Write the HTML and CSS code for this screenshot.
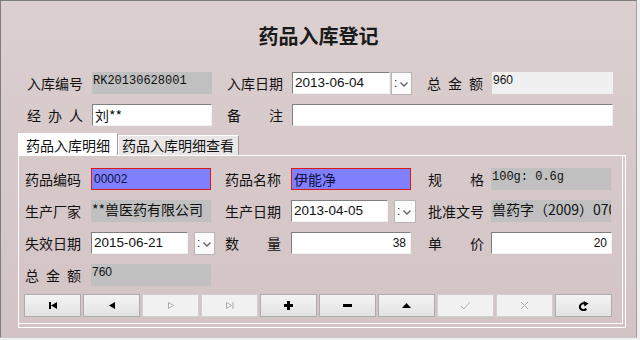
FILE: index.html
```html
<!DOCTYPE html>
<html lang="zh-CN">
<head>
    <meta charset="UTF-8">
    <title>药品入库登记</title>
    <link rel="stylesheet" href="styles.css">
</head>
<body>

<div class="window">
    <div class="title">药品入库登记</div>

    <div class="head-grid">
        <span class="label">入库编号</span>
        <div class="field readonly mono">RK20130628001</div>
        <span class="label">入库日期</span>
        <div class="date-pick">
            <div class="field input date w98">2013-06-04</div>
            <div class="drop ml1"><span>:</span><svg width="8" height="5" viewBox="0 0 8 5"><path d="M0.5 0.5 L4 4 L7.5 0.5" fill="none" stroke="#666" stroke-width="1.4"/></svg></div>
        </div>
        <span class="label">总 金 额</span>
        <div class="field light">960</div>

        <span class="label">经 办 人</span>
        <div class="field input cjk">刘**</div>
        <span class="label">备 注</span>
        <div class="field input wide"></div>
    </div>

    <div class="tabs">
        <div class="tab active">药品入库明细</div>
        <div class="tab">药品入库明细查看</div>
    </div>

    <div class="panel">
        <div class="panel-body">
            <div class="detail-grid">
                <span class="label">药品编码</span>
                <div class="field hl">00002</div>
                <span class="label">药品名称</span>
                <div class="field hl cjk">伊能净</div>
                <span class="label">规 格</span>
                <div class="field readonly mono">100g: 0.6g</div>

                <span class="label">生产厂家</span>
                <div class="field readonly cjk">**兽医药有限公司</div>
                <span class="label">生产日期</span>
                <div class="date-pick">
                    <div class="field input date w97">2013-04-05</div>
                    <div class="drop ml6 w22"><span>:</span><svg width="8" height="5" viewBox="0 0 8 5"><path d="M0.5 0.5 L4 4 L7.5 0.5" fill="none" stroke="#666" stroke-width="1.4"/></svg></div>
                </div>
                <span class="label">批准文号</span>
                <div class="field readonly cjk">兽药字（2009）0700</div>

                <span class="label">失效日期</span>
                <div class="date-pick">
                    <div class="field input date w97">2015-06-21</div>
                    <div class="drop ml6"><span>:</span><svg width="8" height="5" viewBox="0 0 8 5"><path d="M0.5 0.5 L4 4 L7.5 0.5" fill="none" stroke="#666" stroke-width="1.4"/></svg></div>
                </div>
                <span class="label">数 量</span>
                <div class="field input num w120">38</div>
                <span class="label">单 价</span>
                <div class="field input num">20</div>

                <span class="label">总 金 额</span>
                <div class="field readonly">760</div>
            </div>

            <div class="toolbar">
                <div class="btn"><svg width="8" height="7" viewBox="0 0 8 7"><rect x="0" y="0" width="2" height="7"/><polygon points="8,0 2,3.5 8,7"/></svg></div>
                <div class="btn"><svg width="6" height="7" viewBox="0 0 6 7"><polygon points="6,0 0,3.5 6,7"/></svg></div>
                <div class="btn off"><svg width="8" height="9" viewBox="0 0 8 9"><polygon points="1.5,1.5 6.5,4.5 1.5,7.5" fill="none" stroke="#fff" transform="translate(0.6,0.6)"/><polygon points="1.5,1.5 6.5,4.5 1.5,7.5" fill="none" stroke="#a8a8a8"/></svg></div>
                <div class="btn off"><svg width="10" height="9" viewBox="0 0 10 9"><path d="M1.5 1.5 L6.5 4.5 L1.5 7.5 Z M8 1 V8" fill="none" stroke="#fff" transform="translate(0.6,0.6)"/><path d="M1.5 1.5 L6.5 4.5 L1.5 7.5 Z M8 1 V8" fill="none" stroke="#a8a8a8"/></svg></div>
                <div class="btn"><svg width="9" height="9" viewBox="0 0 9 9"><rect x="3" y="0" width="3" height="9"/><rect x="0" y="3" width="9" height="3"/></svg></div>
                <div class="btn"><svg width="9" height="3" viewBox="0 0 9 3"><rect x="0" y="0" width="9" height="3"/></svg></div>
                <div class="btn"><svg width="9" height="5" viewBox="0 0 9 5"><polygon points="0,5 4.5,0 9,5"/></svg></div>
                <div class="btn off"><svg width="11" height="9" viewBox="0 0 11 9"><path d="M1 5 L4 8 L10 1" fill="none" stroke="#fff" transform="translate(0.6,0.6)"/><path d="M1 5 L4 8 L10 1" fill="none" stroke="#adadad"/></svg></div>
                <div class="btn off"><svg width="9" height="9" viewBox="0 0 9 9"><path d="M1 1 L8 8 M8 1 L1 8" fill="none" stroke="#fff" transform="translate(0.6,0.6)"/><path d="M1 1 L8 8 M8 1 L1 8" fill="none" stroke="#adadad"/></svg></div>
                <div class="btn"><svg width="10" height="10" viewBox="0 0 10 10"><path d="M7.2 7.6 A3.4 3.4 0 1 1 5.8 2.6" fill="none" stroke="#000" stroke-width="2"/><polygon points="4.6,0 9.6,2.6 5.4,5.6"/></svg></div>
            </div>
        </div>
    </div>
</div>

</body>
</html>
```

FILE: styles.css
```css
body {
    margin: 0;
    background: #f0f0f0;
    font-family: "Noto Sans CJK SC", "Liberation Sans", sans-serif;
    color: #111;
}

.window {
    box-sizing: border-box;
    width: 637px;
    height: 338px;
    border: 1px solid;
    border-color: #7d7d7d #a0a0a0 #c8c8c8 #7d7d7d;
    background: linear-gradient(#dbcfd0, #d3c3c4);
}

.title {
    padding-top: 21px;
    height: 28px;
    line-height: 28px;
    font-size: 20px;
    font-weight: bold;
    text-align: center;
    color: #1a1a1a;
}

.head-grid {
    display: grid;
    grid-template-columns: 65px 135px 65px 135px 65px 121px;
    grid-auto-rows: 22px;
    row-gap: 10px;
    margin-top: 22px;
    padding-left: 26px;
    align-items: center;
}

.detail-grid {
    display: grid;
    grid-template-columns: 66px 134px 66px 137px 63px 121px;
    grid-auto-rows: 22px;
    row-gap: 10px;
    align-items: center;
}

.label {
    width: 56px;
    font-size: 14px;
    line-height: 22px;
    text-align: justify;
    text-align-last: justify;
}

.field {
    box-sizing: border-box;
    width: 120px;
    height: 22px;
    font-family: "Liberation Sans", sans-serif;
    font-size: 12px;
    overflow: hidden;
    white-space: nowrap;
}

.readonly {
    background: #c0c0c0;
    padding: 1px 0 0 1px;
    line-height: 14px;
}

.light {
    width: 121px;
    background: #f0f0f0;
    padding: 1px 0 0 1px;
    line-height: 14px;
}

.mono {
    font-family: "Liberation Mono", monospace;
    font-size: 12px;
    padding-top: 2px;
}

.cjk {
    font-family: "Noto Sans CJK SC", sans-serif;
    font-size: 14px;
    line-height: 18px;
    padding-top: 0;
}

.input {
    background: #fff;
    border: 1px solid;
    border-color: #7f7f7f #f2f2f2 #f2f2f2 #7f7f7f;
    padding: 0 2px;
    line-height: 20px;
}

.input.cjk {
    line-height: 20px;
}

.wide {
    width: 321px;
    grid-column: span 3;
}

.date {
    font-size: 13.5px;
}

.num {
    width: 121px;
    text-align: right;
    padding-right: 4px;
}

.hl {
    background: #8080ff;
    border: 1px solid #e01818;
    padding: 0 2px;
    line-height: 20px;
    color: #101040;
}

.hl.cjk {
    line-height: 20px;
}

.w97 { width: 97px; }
.w98 { width: 98px; }
.w120 { width: 120px; }

.date-pick {
    display: flex;
}

.drop {
    box-sizing: border-box;
    width: 21px;
    height: 23px;
    background: #fbfbfb;
    border: 1px solid #b4b4b4;
    display: flex;
    align-items: center;
    gap: 3px;
    padding-left: 2px;
    font: 12px "Liberation Sans", sans-serif;
    color: #333;
}

.drop svg {
    margin-top: 2px;
}

.ml1 { margin-left: 1px; }
.ml6 { margin-left: 6px; }
.w22 { width: 22px; }

.tabs {
    display: flex;
    align-items: flex-end;
    height: 22px;
    margin-top: 7px;
    margin-left: 17px;
}

.tab {
    box-sizing: border-box;
    height: 20px;
    padding: 0 4px 0 3px;
    font-size: 14px;
    line-height: 19px;
    background: #e8e6e6;
    border: 1px solid #fff;
    border-right-color: #9c9c9c;
    border-bottom: none;
}

.tab.active {
    height: 22px;
    padding: 1px 7px 0 7px;
    background: #fff;
    line-height: 20px;
}

.panel {
    box-sizing: border-box;
    width: 608px;
    height: 173px;
    margin-left: 17px;
    border: 1px solid #fff;
}

.panel-body {
    box-sizing: border-box;
    width: 604px;
    height: 168px;
    padding: 12px 0 0 6px;
    border-right: 1px solid #fff;
    border-bottom: 1px solid #fff;
}

.toolbar {
    display: flex;
    gap: 2px;
    margin-top: 8px;
    margin-left: -1px;
}

.btn {
    box-sizing: border-box;
    width: 57px;
    height: 23px;
    border: 1px solid #acacac;
    background: linear-gradient(#f3f3f3, #e3e3e3);
    display: flex;
    justify-content: center;
    align-items: center;
}

.btn.off {
    border-color: #cfcfcf;
    background: #f1f1f1;
}
```
